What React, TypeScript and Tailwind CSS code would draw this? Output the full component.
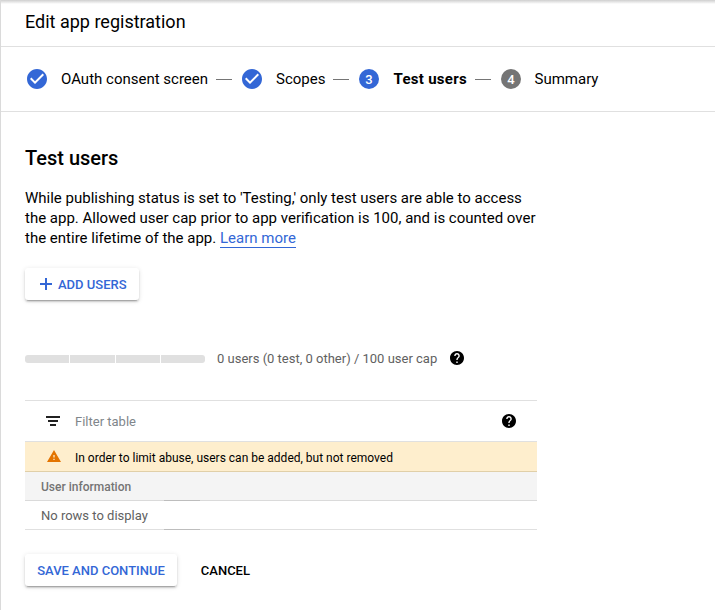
import type { ReactNode } from "react";

function CheckCircle({ className }: { className: string }) {
  return (
    <svg viewBox="0 0 24 24" fill="currentColor" className={`size-6 shrink-0 text-[#3367d6] ${className}`}>
      <path d="M12 2C6.480 2 2 6.480 2 12s4.480 10 10 10 10-4.480 10-10S17.520 2 12 2zm-2 15l-5-5 1.410-1.410L10 14.170l7.590-7.590L19 8l-9 9z" />
    </svg>
  );
}

function Help({ className }: { className: string }) {
  return (
    <svg viewBox="2 2 20 20" fill="currentColor" className={`size-3.5 shrink-0 text-black ${className}`}>
      <path d="M12 2C6.480 2 2 6.480 2 12s4.480 10 10 10 10-4.480 10-10S17.520 2 12 2zm1 17h-2v-2h2v2zm2.070-7.750l-.9.920C13.450 12.900 13 13.500 13 15h-2v-.5c0-1.100.450-2.100 1.170-2.830l1.240-1.260c.370-.360.590-.860.590-1.410 0-1.100-.9-2-2-2s-2 .9-2 2H8c0-2.210 1.790-4 4-4s4 1.790 4 4c0 .880-.360 1.680-.930 2.250z" />
    </svg>
  );
}

function Dash() {
  return <div className="h-px w-4 shrink-0 bg-[#757575]" />;
}

function NumberBadge({ children, className }: { children: ReactNode; className: string }) {
  return (
    <span
      className={`mx-0.5 flex size-5 shrink-0 items-center justify-center rounded-full pt-px text-[13px] leading-5 font-medium text-white ${className}`}
    >
      {children}
    </span>
  );
}

export default function App() {
  return (
    <div className="h-[610px] w-[715px] overflow-hidden border-l border-[#dadada] bg-white font-[Roboto,sans-serif] text-black">
      <div className="h-1 bg-linear-to-b from-[#cfcfcf] to-white" />
      <header className="flex h-[43px] items-center border-b border-[#e0e0e0] pb-1.5 pl-6">
        <h1 className="text-[18px] leading-6">Edit app registration</h1>
      </header>

      <nav className="flex h-[65px] items-center border-b border-[#e0e0e0] pl-6 text-[15px] leading-5 whitespace-nowrap">
        <CheckCircle className="" />
        <span className="ml-3 w-[155px]">OAuth consent screen</span>
        <Dash />
        <CheckCircle className="ml-2" />
        <span className="ml-3 w-[57px]">Scopes</span>
        <Dash />
        <div className="ml-2">
          <NumberBadge className="bg-[#3367d6]">3</NumberBadge>
        </div>
        <span className="ml-3 w-[82px] pl-[0.5px] font-bold tracking-[0.28px]">Test users</span>
        <Dash />
        <div className="ml-2">
          <NumberBadge className="bg-[#757575]">4</NumberBadge>
        </div>
        <span className="ml-[11.5px]">Summary</span>
      </nav>

      <main className="ml-6 w-[512px] pt-[34px]">
        <h2 className="text-[20px] leading-6 font-medium">Test users</h2>
        <p className="mt-[18px] text-[15px] leading-5 whitespace-nowrap">
          While publishing status is set to 'Testing,' only test users are able to access
          <br />
          the app. Allowed user cap prior to app verification is 100, and is counted over
          <br />
          the entire lifetime of the app.{" "}
          <a className="border-b border-[#3367d6] text-[#3367d6]">Learn more</a>
        </p>

        <button className="mt-5 flex h-8 w-[114px] items-center rounded-[3px] pl-[15px] text-[13px] font-medium whitespace-nowrap text-[#3367d6] shadow-[0_3px_1px_-2px_rgba(0,0,0,0.2),0_2px_2px_rgba(0,0,0,0.14),0_1px_5px_rgba(0,0,0,0.12)]">
          <svg viewBox="0 0 12 12" className="mr-1.5 size-3 shrink-0" fill="currentColor">
            <path d="M5 0h2v5h5v2H7v5H5V7H0V5h5z" />
          </svg>
          <span className="pt-0.5">ADD USERS</span>
        </button>

        <div className="mt-12 flex h-5 items-center text-[13px] text-[#616161]">
          <div className="mt-0.5 flex h-2 w-[180px] gap-px overflow-hidden rounded-[3px]">
            <div className="w-11 bg-[#e0e0e0]" />
            <div className="w-[45px] bg-[#e0e0e0]" />
            <div className="w-11 bg-[#e0e0e0]" />
            <div className="w-11 bg-[#e0e0e0]" />
          </div>
          <span className="ml-3 w-[233px] pt-0.5 whitespace-nowrap">0 users (0 test, 0 other) / 100 user cap</span>
          <Help className="" />
        </div>

        <section className="mt-8 border-t border-[#e0e0e0]">
          <div className="flex h-[41px] items-center border-b border-[#e0e0e0] text-[13px] text-[#80868b]">
            <svg viewBox="0 0 14 10" className="ml-[21px] h-2.5 w-3.5" fill="#212121">
              <path d="M0 0h14v2H0zM2 4h10v2H2zM4 8h6v2H4z" />
            </svg>
            <span className="ml-[15px] flex-1 pt-0.5">Filter table</span>
            <Help className="mr-[21px]" />
          </div>
          <div className="flex h-[30px] items-center border-b border-[#e0cfa8] bg-[#feeecd] text-[12px]">
            <svg
              viewBox="1 2 22 19"
              fill="currentColor"
              preserveAspectRatio="none"
              className="mb-px ml-[22px] h-3 w-3.5 shrink-0 text-[#e37400]"
            >
              <path d="M1 21h22L12 2 1 21zm12-3h-2v-2h2v2zm0-4h-2v-4h2v4z" />
            </svg>
            <span className="ml-3.5 pt-0.5">In order to limit abuse, users can be added, but not removed</span>
          </div>
          <div className="h-7 bg-[#f4f4f4] pl-4 text-[12px] leading-[30px] font-medium text-[#757575]">
            User information
          </div>
          <div className="flex h-px bg-[#dadada]">
            <div className="ml-[139px] w-9 bg-[#bdbdbd]" />
          </div>
          <div className="h-7 pl-4 text-[13px] leading-[30px] text-[#616161]">No rows to display</div>
          <div className="flex h-px bg-[#e0e0e0]">
            <div className="ml-[139px] w-9 bg-[#bdbdbd]" />
          </div>
        </section>

        <div className="mt-6 flex h-8 items-center text-[13px] font-medium whitespace-nowrap">
          <button className="h-8 w-[152px] rounded-[3px] pt-0.5 text-[#3367d6] shadow-[0_3px_1px_-2px_rgba(0,0,0,0.2),0_2px_2px_rgba(0,0,0,0.14),0_1px_5px_rgba(0,0,0,0.12)]">
            SAVE AND CONTINUE
          </button>
          <button className="ml-[23.8px] pt-0.5">CANCEL</button>
        </div>
      </main>
    </div>
  );
}
